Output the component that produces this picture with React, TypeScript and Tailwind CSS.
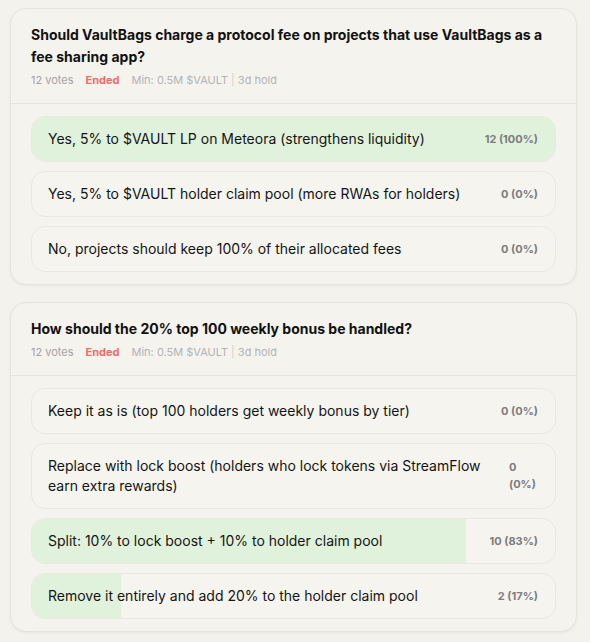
import React from "react";

type Option = { label: string; votes: number; pct: number };
type Poll = { question: string; votes: number; options: Option[] };

const polls: Poll[] = [
  {
    question:
      "Should VaultBags charge a protocol fee on projects that use VaultBags as a fee sharing app?",
    votes: 12,
    options: [
      { label: "Yes, 5% to $VAULT LP on Meteora (strengthens liquidity)", votes: 12, pct: 100 },
      { label: "Yes, 5% to $VAULT holder claim pool (more RWAs for holders)", votes: 0, pct: 0 },
      { label: "No, projects should keep 100% of their allocated fees", votes: 0, pct: 0 },
    ],
  },
  {
    question: "How should the 20% top 100 weekly bonus be handled?",
    votes: 12,
    options: [
      { label: "Keep it as is (top 100 holders get weekly bonus by tier)", votes: 0, pct: 0 },
      {
        label:
          "Replace with lock boost (holders who lock tokens via StreamFlow earn extra rewards)",
        votes: 0,
        pct: 0,
      },
      { label: "Split: 10% to lock boost + 10% to holder claim pool", votes: 10, pct: 83 },
      { label: "Remove it entirely and add 20% to the holder claim pool", votes: 2, pct: 17 },
    ],
  },
];

function OptionRow({ option }: { option: Option }) {
  return (
    <div className="relative overflow-hidden rounded-[14px] border border-[#e9e8e2] bg-[#f5f4ef]">
      {/* result bar */}
      <div
        className="absolute inset-y-0 left-0 bg-[#e1f2dc]"
        style={{ width: `${option.pct}%` }}
      />
      <div className="relative flex items-center justify-between gap-4 py-3 pl-4 pr-[17px]">
        <span className="text-[14px] leading-[20px] text-[#141414]">{option.label}</span>
        <span className="text-[11px] font-bold leading-[17px] text-[#7d7d7d]">
          {option.votes} ({option.pct}%)
        </span>
      </div>
    </div>
  );
}

function PollCard({ poll }: { poll: Poll }) {
  return (
    <div className="rounded-[16px] border border-[#e4e3dd] bg-[#f4f3ee] shadow-[0_1px_3px_rgba(0,0,0,0.05)]">
      <div className="border-b border-[#e6e5df] px-5 pt-[15px] pb-[14px]">
        <h3 className="text-[14px] font-bold leading-[22px] text-[#111111]">{poll.question}</h3>
        <div className="mt-[3px] flex items-center gap-3 text-[11px] leading-[18px]">
          <span className="text-[#a3a3a3]">{poll.votes} votes</span>
          <span className="font-bold text-[#f06b6b]">Ended</span>
          <span className="text-[#b3b3b3]">
            Min: 0.5M $VAULT <span className="text-[#d0d0d0]">|</span> 3d hold
          </span>
        </div>
      </div>
      <div className="flex flex-col gap-[9px] px-5 pt-3 pb-3">
        {poll.options.map((o) => (
          <OptionRow key={o.label} option={o} />
        ))}
      </div>
    </div>
  );
}

export default function App() {
  return (
    <div
      className="min-h-[642px] bg-[#f3f2ec] pt-2 pl-[10px] pr-[13px]"
      style={{ fontFamily: "Inter, 'Noto Sans', sans-serif" }}
    >
      <div className="flex flex-col gap-[17px]">
        {polls.map((p) => (
          <PollCard key={p.question} poll={p} />
        ))}
      </div>
    </div>
  );
}
